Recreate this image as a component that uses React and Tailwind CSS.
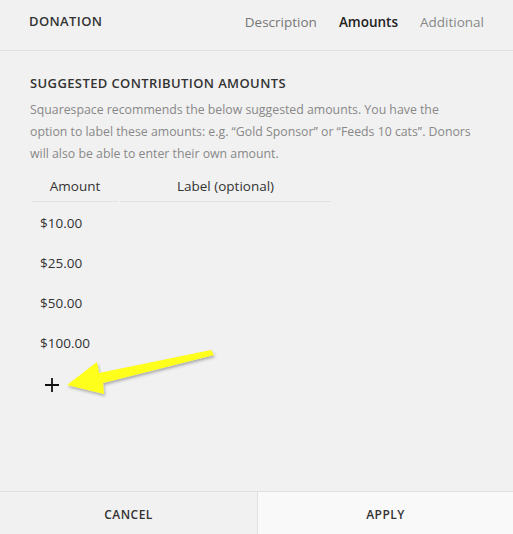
import React from 'react';

const font = { fontFamily: '"Open Sans", "Liberation Sans", sans-serif' };

const amounts = ['$10.00', '$25.00', '$50.00', '$100.00'];

const App = () => {
  return (
    <div className="w-[513px] h-[534px] bg-[#f1f1f1] flex flex-col text-[#333]" style={font}>
      <div className="h-[51px] shrink-0 border-b border-[#e1e1e1] flex items-center px-[29px] pb-[6px]">
        <div className="text-[13px] font-semibold tracking-[0.03em] text-[#333]">DONATION</div>
        <div className="ml-auto flex gap-[22px] text-[13.5px]">
          <span className="text-[#777]">Description</span>
          <span className="text-[#222] font-semibold">Amounts</span>
          <span className="text-[#888]">Additional</span>
        </div>
      </div>

      <div className="flex-1 px-[30px] pt-[22px] relative">
        <h2 className="text-[13px] font-semibold tracking-[0.03em] text-[#333] leading-[20px]">SUGGESTED CONTRIBUTION AMOUNTS</h2>
        <p className="mt-[6px] text-[12.3px] leading-[22px] text-[#888] whitespace-nowrap">
          Squarespace recommends the below suggested amounts. You have the<br />
          option to label these amounts: e.g. “Gold Sponsor” or “Feeds 10 cats”. Donors<br />
          will also be able to enter their own amount.
        </p>

        <div className="mt-[7px] ml-[2px] w-[300px]">
          <div className="flex gap-[2px] text-[13.5px] text-[#333]">
            <div className="w-[86px] h-[30px] flex items-center justify-center border-b border-[#e1e1e1]">Amount</div>
            <div className="w-[211px] h-[30px] flex items-center justify-center border-b border-[#e1e1e1]">Label (optional)</div>
          </div>
          {amounts.map((a) => (
            <div key={a} className="h-[40px] flex items-center pl-[8px] pt-[2px] text-[13.5px] text-[#333]">{a}</div>
          ))}
          <div className="h-[40px] flex items-center pl-[12px] pt-[5px]">
            <svg width="16" height="16" viewBox="0 0 16 16">
              <path d="M8 1v14M1 8h14" stroke="#111" strokeWidth="1.8" />
            </svg>
          </div>
        </div>

        <svg className="absolute left-0 top-[-51px] pointer-events-none" width="513" height="534" viewBox="0 0 513 534">
          <defs>
            <filter id="sh" x="-20%" y="-20%" width="140%" height="160%">
              <feDropShadow dx="1" dy="2" stdDeviation="1.5" floodColor="#000" floodOpacity="0.3" />
            </filter>
          </defs>
          <polygon
            points="67,385 97,362 99,373 211,350 214,355 103,383 104,394"
            fill="#ffff1a"
            filter="url(#sh)"
          />
        </svg>
      </div>

      <div className="h-[43px] shrink-0 border-t border-[#e1e1e1] flex text-[12px] font-semibold tracking-[0.04em] text-[#333]">
        <div className="w-[257px] flex items-center justify-center pt-[3px]">CANCEL</div>
        <div className="flex-1 flex items-center justify-center pt-[3px] bg-[#f9f9f9] border-l border-[#e1e1e1]">APPLY</div>
      </div>
    </div>
  );
};

export default App;
